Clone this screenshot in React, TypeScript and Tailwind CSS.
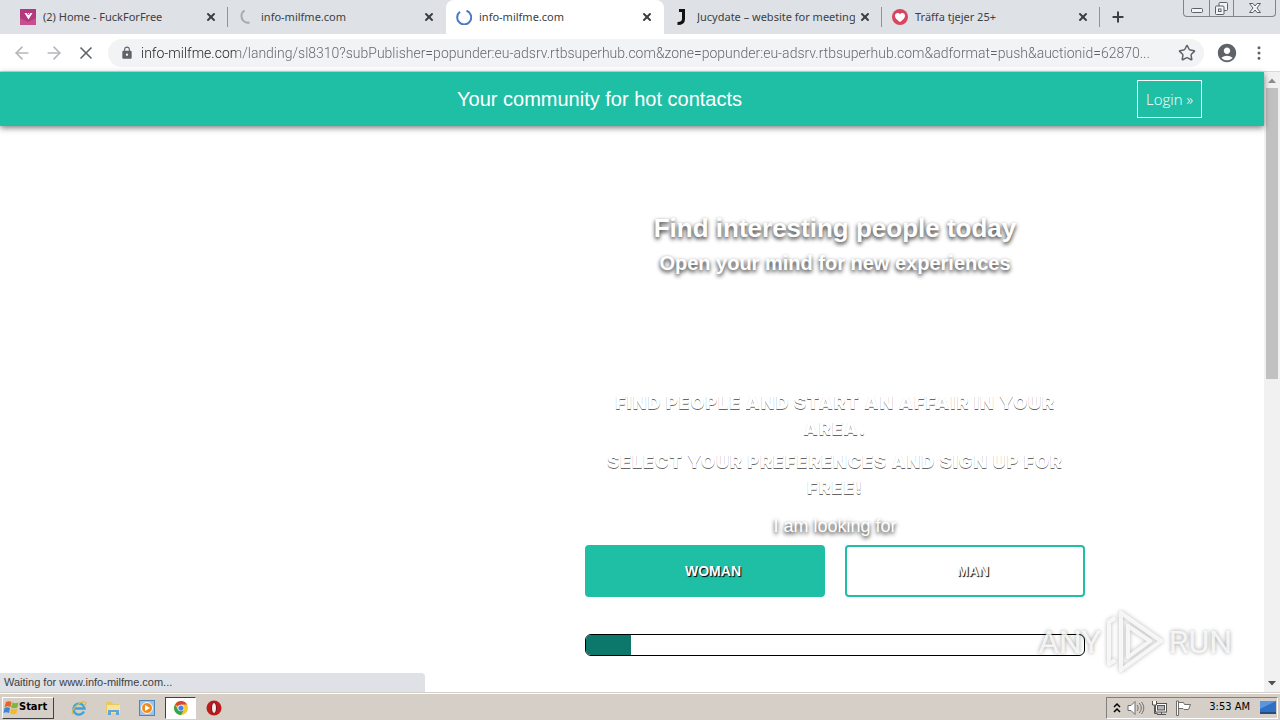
import React, { useState } from 'react';
import { ArrowLeft, ArrowRight, X, Plus, Star, MoreVertical } from 'lucide-react';
import { MdLock, MdAccountCircle } from 'react-icons/md';

interface BrowserTab {
  id: string;
  title: string;
  icon: React.ReactNode;
  divider?: boolean;
}

const PAGE_URL =
  'info-milfme.com/landing/sl8310?subPublisher=popunder:eu-adsrv.rtbsuperhub.com&zone=popunder:eu-adsrv.rtbsuperhub.com&adformat=push&auctionid=62870...';

const Spinner = ({ className, d }: { className: string; d: string }) => (
  <svg viewBox="0 0 16 16" className={`w-4 h-4 shrink-0 ${className}`} fill="none" stroke="currentColor" strokeWidth="2">
    <path d={d} />
  </svg>
);

const tabs: BrowserTab[] = [
  {
    id: 'home',
    title: '(2) Home - FuckForFree',
    divider: true,
    icon: (
      <svg viewBox="0 0 16 16" className="w-4 h-4 shrink-0">
        <rect width="16" height="16" fill="#b5387e" />
        <path d="M0 16h16V9L8 13 0 9z" fill="#c9508f" />
        <path d="M4.500 4h8l-4 6.500z" fill="#fff" />
        <path d="M7 4l1.500 2L10 4" fill="none" stroke="#b5387e" />
      </svg>
    ),
  },
  { id: 'loading', title: 'info-milfme.com', icon: <Spinner className="text-[#a4a7ac]" d="M6.500 1.500A6.600 6.600 0 0 0 11.500 13.500" /> },
  { id: 'active', title: 'info-milfme.com', icon: <Spinner className="text-[#4a78c8]" d="M10.500 1.800A7 7 0 1 1 4 2.800" /> },
  {
    id: 'jucydate',
    title: 'Jucydate – website for meeting',
    divider: true,
    icon: (
      <svg viewBox="0 0 16 16" className="w-4 h-4 shrink-0" fill="none" stroke="#111" strokeWidth="3">
        <path d="M5 1.500h4.500V10c0 3-1.500 4.500-6 4.500" />
      </svg>
    ),
  },
  {
    id: 'traffa',
    title: 'Träffa tjejer 25+',
    divider: true,
    icon: (
      <svg viewBox="0 0 16 16" className="w-4 h-4 shrink-0">
        <circle cx="8" cy="8" r="8" fill="#d9455f" />
        <path d="M8 13C4 10.500 3 8.500 3 6.600 3 4 6.500 3.200 8 5.400 9.500 3.200 13 4 13 6.600c0 1.900-1 3.900-5 6.400z" fill="#fff" />
      </svg>
    ),
  },
];

function TabStrip() {
  return (
    <div className="flex h-[34px] bg-[#dee1e6] text-[#3c4043]">
      <div className="w-2.5 shrink-0" />
      {tabs.map((tab) => (
        <div
          key={tab.id}
          className={`flex w-[218px] min-w-0 items-center pl-2.5 ${tab.id === 'active' ? 'bg-white rounded-t-lg' : ''}`}
        >
          {tab.icon}
          <button className="ml-[7px] flex-1 min-w-0 overflow-hidden whitespace-nowrap text-left text-[11px] leading-4">
            {tab.title}
          </button>
          <button aria-label={`Close ${tab.title}`} className="ml-1 mr-2.5 shrink-0">
            <X className="w-3 h-3" strokeWidth={4} />
          </button>
          <div className={`h-5 w-px ${tab.divider ? 'bg-[#8f949b]' : ''}`} />
        </div>
      ))}
      <div className="flex flex-1 items-center justify-between pl-2.5 pr-1">
        <button aria-label="New tab">
          <Plus className="w-4 h-4" strokeWidth={3} />
        </button>
        <div className="flex h-[17px] self-start rounded-b border border-t-0 border-[#80858c]">
          <button aria-label="Minimize" className="flex w-[25px] items-center justify-center">
            <svg viewBox="0 0 12 12" className="w-3 h-3" fill="#f3f4f6" stroke="#5c6168">
              <rect x="0.500" y="6.500" width="11" height="4" rx="1" />
            </svg>
          </button>
          <button aria-label="Restore" className="flex w-[25px] items-center justify-center border-x border-[#80858c]">
            <svg viewBox="0 0 13 13" className="w-[13px] h-[13px]" fill="#f3f4f6" stroke="#5c6168">
              <rect x="4" y="0.500" width="8.500" height="8" rx="1" />
              <rect x="0.500" y="4" width="8.500" height="8.500" rx="1" />
              <rect x="3.500" y="7" width="2.500" height="2.500" />
            </svg>
          </button>
          <button aria-label="Close" className="flex w-[41px] items-center justify-center">
            <svg viewBox="0 0 12 12" className="w-3 h-3" fill="#f3f4f6" stroke="#5c6168">
              <path d="M.5 1.500h3.500l2 2.500 2-2.500h3.500L8 6l3.500 4.500H8L6 8l-2 2.500H.5L4 6z" />
            </svg>
          </button>
        </div>
      </div>
    </div>
  );
}

function Toolbar() {
  return (
    <div className="flex h-[38px] items-center border-b border-[#d5dade] bg-white px-3 text-[#5f6368]">
      <button aria-label="Back" className="text-[#b4b7ba]"><ArrowLeft className="w-5 h-5" /></button>
      <button aria-label="Forward" className="ml-3 text-[#b4b7ba]"><ArrowRight className="w-5 h-5" /></button>
      <button aria-label="Stop" className="ml-3"><X className="w-5 h-5" strokeWidth={2} /></button>
      <div className="ml-3 mr-3 flex h-7 min-w-0 flex-1 items-center rounded-full bg-[#f1f3f4] pl-3 pr-2">
        <MdLock className="w-3.5 h-3.5 shrink-0" />
        <input
          type="text"
          aria-label="Address"
          defaultValue={PAGE_URL}
          className="ml-[7px] min-w-0 flex-1 bg-[linear-gradient(90deg,#202124_95px,#5f6368_95px)] bg-clip-text font-['Roboto',sans-serif] text-sm font-light text-transparent outline-none"
        />
        <button aria-label="Bookmark"><Star className="w-[18px] h-[18px]" /></button>
      </div>
      <button aria-label="Profile"><MdAccountCircle className="w-[22px] h-[22px]" /></button>
      <button aria-label="Menu" className="ml-3"><MoreVertical className="w-[18px] h-[18px]" strokeWidth={2} /></button>
    </div>
  );
}

function Scrollbar() {
  return (
    <div className="flex w-4 shrink-0 flex-col items-center bg-[#f1f1f1]">
      <svg viewBox="0 0 16 16" className="w-4 h-4" fill="#8c8c8c"><path d="M4 11h8L8 6.500z" /></svg>
      <div className="h-[47%] w-3 bg-[#c1c1c1]" />
      <svg viewBox="0 0 16 16" className="mt-auto w-4 h-4" fill="#505050"><path d="M4 5h8L8 9.500z" /></svg>
    </div>
  );
}

function Watermark() {
  return (
    <div className="pointer-events-none absolute bottom-[18px] right-8 flex items-center font-['Roboto',sans-serif] text-[32px] leading-none text-white/80 [text-shadow:0_0_4px_rgba(0,0,0,0.4)]">
      <span>ANY</span>
      <svg viewBox="0 0 60 64" className="mx-1 h-16 w-[60px] drop-shadow-[0_0_2px_rgba(0,0,0,0.35)]" fill="none" stroke="#fff" strokeOpacity="0.8" strokeWidth="4" strokeLinejoin="round">
        <path d="M16 3L56 31 16 60z" />
        <path d="M23 16v31L45 31z" />
        <path d="M10 8l-6 4v42l6-4" />
      </svg>
      <span>RUN</span>
    </div>
  );
}

function LandingPage() {
  const [choice, setChoice] = useState('woman');
  const progress = 9;

  return (
    <div className="relative flex-1 min-w-0 bg-white">
      <header className="bg-[#1fbfa6] shadow-[0_2px_6px_rgba(0,0,0,0.5)]">
        <div className="mx-auto flex h-[54px] max-w-[1140px] items-center">
          <h1 className="flex-1 text-center text-xl text-white">Your community for hot contacts</h1>
          <a href="#login" className="border border-white px-2 py-2 font-['Open_Sans','Noto_Sans',sans-serif] text-[15px] leading-5 font-light text-white">
            Login »
          </a>
        </div>
      </header>

      <main className="mx-auto max-w-[1140px] pt-[83px]">
        <div className="ml-auto mr-[117px] max-w-[500px] text-center text-white">
          <h2 className="text-[26px] leading-[38px] font-bold [text-shadow:0_2px_4px_rgba(0,0,0,0.9)]">Find interesting people today</h2>
          <h3 className="text-xl leading-8 font-bold [text-shadow:0_2px_4px_rgba(0,0,0,0.9)]">Open your mind for new experiences</h3>

          <div className="mt-[111px] space-y-[7px] font-['Inter',sans-serif] text-lg leading-[26px] font-black uppercase tracking-wider [text-shadow:0_1px_0_rgba(0,0,0,0.6)]">
            <p>Find people and start an affair in your area.</p>
            <p>Select your preferences and sign up for free!</p>
          </div>

          <p className="mt-3 text-lg leading-[26px] [text-shadow:0_2px_4px_#000]">I am looking for</p>

          <div className="mt-1.5 grid grid-cols-2 gap-5">
            {['woman', 'man'].map((item) => (
              <button
                key={item}
                onClick={() => setChoice(item)}
                className={`h-[52px] rounded border-2 border-[#1fbfa6] pl-4 text-sm font-bold uppercase [text-shadow:1px_1px_1px_#000] ${
                  choice === item ? 'bg-[#1fbfa6]' : 'bg-white'
                }`}
              >
                {item}
              </button>
            ))}
          </div>

          <div role="progressbar" aria-label="Sign up progress" aria-valuenow={progress} className="mt-[37px] h-[22px] overflow-hidden rounded-md border border-black">
            <div className="h-full bg-[#0c776b]" style={{ width: `${progress}%` }} />
          </div>
        </div>
      </main>

      <Watermark />
      <div className="absolute bottom-0 left-0 w-[425px] rounded-tr bg-[#dee1e6] px-1 text-[11px] leading-[19px] text-[#3c4043]">
        Waiting for www.info-milfme.com...
      </div>
    </div>
  );
}

function Taskbar() {
  return (
    <footer className="flex h-7 items-center border-t border-[#d4d0c8] bg-[#d5cfc7] px-0.5 pt-0.5 text-black shadow-[inset_0_1px_0_#fff]">
      <button className="flex h-[22px] w-[52px] items-center border border-white border-r-[#404040] border-b-[#404040] text-[11px] font-bold">
        <svg viewBox="0 0 16 16" className="w-4 h-4 shrink-0">
          <path d="M3 2c2-1 4-1 5.500 0L7.500 7C5 6 4 6 1.500 7z" fill="#e8622c" />
          <path d="M9.500 2.500c2 1 3.500 1 6 0L14.500 7.500c-3 1-4 1-6.500 0z" fill="#7cb83c" />
          <path d="M1.500 8c2-1 3.500-1 5.500 0l-1 5c-2-1-3.500-1-5.500 0z" fill="#3a86d8" />
          <path d="M8 8.500c2 1 4 1 6.500 0l-1 5c-3 1-4.500 1-6.500 0z" fill="#f7b92c" />
        </svg>
        Start
      </button>
      <button aria-label="Internet Explorer" className="ml-[17px]">
        <svg viewBox="0 0 16 16" className="w-4 h-4" fill="none">
          <path d="M13 11.500A5.500 5.500 0 1 1 13.500 8.500H4" stroke="#3ba4dd" strokeWidth="2.400" />
          <path d="M2 14C-1 11 8 1 14 2c2 1 0 3-1 4" stroke="#e3b83c" strokeWidth="1.200" />
        </svg>
      </button>
      <button aria-label="Explorer" className="ml-[18px]">
        <svg viewBox="0 0 16 16" className="w-4 h-4">
          <path d="M1 2h6l1 2h6v9H1z" fill="#e8c862" />
          <path d="M2 5h13v8H2z" fill="#f7e49a" />
          <path d="M3 15v-5h11v5h-3v-3H6v3z" fill="#5fa5d8" />
        </svg>
      </button>
      <button aria-label="Media Player" className="ml-[18px]">
        <svg viewBox="0 0 16 16" className="w-4 h-4">
          <rect x="0.500" y="0.500" width="15" height="15" fill="#9cc3e6" stroke="#4c87bb" />
          <circle cx="8" cy="8" r="5.500" fill="#f08a1c" stroke="#fff" />
          <path d="M6 5l5 3-5 3z" fill="#fff" />
        </svg>
      </button>
      <button aria-label="Chrome" className="ml-2.5 flex h-[22px] w-[31px] items-center justify-center border border-[#404040] border-r-white border-b-white bg-white">
        <svg viewBox="0 0 16 16" className="w-3.5 h-3.5">
          <circle cx="8" cy="8" r="8" fill="#f8c72c" />
          <path d="M8 8L1.100 4A8 8 0 0 1 15 4H8z" fill="#dc4437" />
          <path d="M1.100 4A8 8 0 0 0 8 16l3.500-6H4.500z" fill="#35a352" />
          <circle cx="8" cy="8" r="3.800" fill="#fff" />
          <circle cx="8" cy="8" r="3" fill="#4684ec" />
        </svg>
      </button>
      <button aria-label="Opera" className="ml-2.5">
        <svg viewBox="0 0 16 16" className="w-4 h-4">
          <circle cx="8" cy="8" r="7.500" fill="#bd1a1e" />
          <ellipse cx="8" cy="8" rx="2.500" ry="5.500" fill="#eee" stroke="#7d0c10" />
        </svg>
      </button>

      <div className="ml-auto flex h-[22px] items-center border border-[#808080] border-r-white border-b-white pl-1.5 pr-px">
        <button aria-label="Show hidden icons">
          <svg viewBox="0 0 8 12" className="w-2 h-3" fill="none" stroke="#000" strokeWidth="1.500">
            <path d="M1 5l3-3 3 3M1 10l3-3 3 3" />
          </svg>
        </button>
        <svg viewBox="0 0 18 16" className="ml-1.5 w-[18px] h-4" fill="#fff" stroke="#6d6d6d">
          <path d="M1 5.500h3l4-4v13l-4-4H1z" />
          <path d="M10 5c1.500 2 1.500 4 0 6M12 3c3 3 3 7 0 10M14.500 2c3 4 3 8 0 12" fill="none" />
        </svg>
        <svg viewBox="0 0 16 16" className="ml-1.5 w-4 h-4" fill="#fff" stroke="#555">
          <rect x="4.500" y="3.500" width="11" height="8.500" />
          <rect x="6.500" y="5.500" width="7" height="4.500" fill="#b5b5b5" />
          <path d="M6 14.500h9M10.500 12v2M3.500 5.500v8h3" fill="none" />
          <path d="M1.500 1v4h4V1" />
        </svg>
        <svg viewBox="0 0 16 16" className="ml-2 w-4 h-4" fill="#fff" stroke="#6d6d6d">
          <path d="M1.500 1h2v14.500h-2zM3.500 2.500h5l1 2h6l-2 5H9l-1-1H3.500z" />
        </svg>
        <time className="ml-[18px] text-[11px]">3:53 AM</time>
        <svg viewBox="0 0 16 14" className="ml-2.5 w-4 h-3.5">
          <rect width="16" height="11" fill="#2f6fc4" />
          <path d="M0 0h16L0 8z" fill="#5a96dd" />
          <path d="M0 11h16v2H0z" fill="#274d80" />
        </svg>
      </div>
    </footer>
  );
}

export default function App() {
  return (
    <div className="flex min-h-screen flex-col overflow-hidden bg-white font-['Liberation_Sans',Arial,sans-serif]">
      <div className="font-['Noto_Sans',sans-serif]">
        <TabStrip />
        <Toolbar />
      </div>
      <div className="flex flex-1">
        <LandingPage />
        <Scrollbar />
      </div>
      <div className="font-['DejaVu_Sans_Condensed','DejaVu_Sans',sans-serif]">
        <Taskbar />
      </div>
    </div>
  );
}
